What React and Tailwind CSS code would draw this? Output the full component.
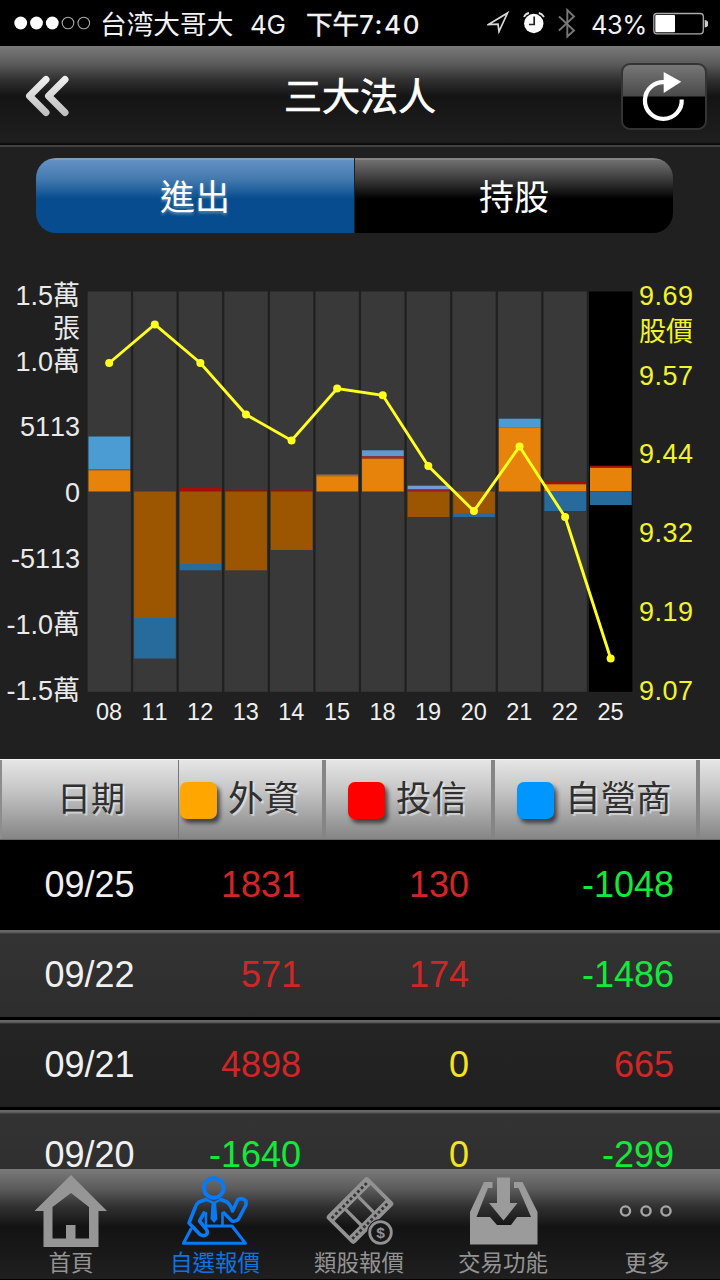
import React from "react";

const CJK = "font-['Liberation_Sans','Noto_Sans_CJK_TC',sans-serif]";

const days = ["08", "11", "12", "13", "14", "15", "18", "19", "20", "21", "22", "25"];

const segments = [
  [0, 436.5, 469, "#4b9cd3"], [0, 469, 470.3, "#7d5866"], [0, 470.3, 491.5, "#e7820a"],
  [1, 491.5, 618, "#9c5500"], [1, 618, 658.5, "#266b9c"],
  [2, 487.7, 491.5, "#a3100c"], [2, 491.5, 564, "#9c5500"], [2, 564, 570.3, "#266b9c"],
  [3, 490, 491.5, "#7b1a10"], [3, 491.5, 570.3, "#9c5500"],
  [4, 490, 491.5, "#7b1a10"], [4, 491.5, 550, "#9c5500"],
  [5, 474.5, 476.2, "#9c6b5e"], [5, 476.2, 491.5, "#e7820a"],
  [6, 450.3, 456.3, "#5d9bd0"], [6, 456.3, 458.7, "#a82a22"], [6, 458.7, 491.5, "#e7820a"],
  [7, 485.7, 489.5, "#6d9dd2"], [7, 489.5, 491.5, "#9a1c26"], [7, 491.5, 517, "#9c5500"],
  [8, 491.5, 513, "#9c5500"], [8, 513, 517, "#266b9c"],
  [9, 418.7, 427.7, "#4b9cd3"], [9, 427.7, 491.5, "#e7820a"],
  [10, 481.7, 484.3, "#a3100c"], [10, 484.3, 491.5, "#e7820a"], [10, 491.5, 511, "#266b9c"],
  [11, 465.7, 467.7, "#a3100c"], [11, 467.7, 491.5, "#e7820a"], [11, 491.5, 505, "#266b9c"],
];

const prices = [363, 324.5, 363, 414.5, 440.5, 388.5, 395.3, 466, 511, 446.5, 517, 658.5];

const volumeAxis = [
  ["1.5萬", 304.5], ["張", 338], ["1.0萬", 371], ["5113", 436],
  ["0", 502], ["-5113", 567.5], ["-1.0萬", 634], ["-1.5萬", 699.5],
];

const priceAxis = [
  ["9.69", 304.5], ["股價", 341], ["9.57", 384.5], ["9.44", 463],
  ["9.32", 541.5], ["9.19", 620.5], ["9.07", 699.5],
];

const rows = [
  ["09/25", "1831", "130", "-1048"],
  ["09/22", "571", "174", "-1486"],
  ["09/21", "4898", "0", "665"],
  ["09/20", "-1640", "0", "-299"],
];

const centre = (i) => 109.2 + i * 45.59;

function StatusBar() {
  return (
    <div className="flex h-[46px] shrink-0 items-center bg-black text-[26px] leading-none text-[#f2f2f2] font-['Inter','Noto_Sans_CJK_TC',sans-serif]">
      <svg className="ml-[14px] w-[78px] shrink-0" height="14" viewBox="0 0 78 14">
        {[6.7, 22.5, 38.3].map((x) => <circle key={x} cx={x} cy="7" r="6.4" fill="#fff" />)}
        {[54, 69.8].map((x) => <circle key={x} cx={x} cy="7" r="5.8" fill="none" stroke="#aaa" strokeWidth="1.1" />)}
      </svg>
      <span className="ml-[8px] mt-[2px] w-[150px] shrink-0 whitespace-nowrap text-[26.7px]">台湾大哥大</span>
      <span className="mt-[3px] w-[56px] shrink-0 tracking-[-0.2px]">4G</span>
      <span className="mt-[3px] flex w-[181px] shrink-0 items-center whitespace-nowrap">
        <span className="text-[26.5px] [-webkit-text-stroke:0.5px_#f2f2f2]">下午</span>
        <span className="text-[26px] font-medium tracking-[1.6px]">7:40</span>
      </span>
      <svg className="w-[90px] shrink-0" height="40" viewBox="487 4 90 40">
        <path d="M488.5 25.5L507.5 14L499 32.5L498 25.2Z" fill="none" stroke="#d8d8d8" strokeWidth="1.7" strokeLinejoin="miter" />
        <circle cx="533.8" cy="24.5" r="9.7" fill="#fff" />
        <path d="M534.2 17.5V25.5H529" fill="none" stroke="#222" strokeWidth="1.7" />
        <path d="M524 18Q525.3 14.8 529 14M544 18Q542.2 14.8 538.8 14" fill="none" stroke="#ddd" strokeWidth="1.8" />
        <path d="M559 17.5L574 31.5L567.3 37.5V11L574 17.5L559 31.5" fill="none" stroke="#777" strokeWidth="1.9" />
      </svg>
      <span className="ml-[14px] mt-[3px] w-[61px] shrink-0 text-[25.5px] tracking-[-0.5px]">43%</span>
      <svg className="w-[56px] shrink-0" height="24" viewBox="652 11.5 56 24">
        <rect x="653.8" y="14" width="49.5" height="20.3" rx="3" fill="none" stroke="#aaa" strokeWidth="1.3" />
        <rect x="655.3" y="15.6" width="19.7" height="17.2" rx="1" fill="#fff" />
        <path d="M704.7 20.5Q708.5 21 708.5 24.3Q708.5 27.5 704.7 28Z" fill="#ccc" />
      </svg>
    </div>
  );
}

function Header() {
  return (
    <header className="flex h-[101px] shrink-0 items-start justify-between border-b-2 border-[#424242] bg-[linear-gradient(#797979_0px,#5b5b5b_18px,#303030_34px,#141414_50px,#1f1f1f_96px,#0a0a0a_98px,#0a0a0a_99px)] pl-6 pr-[13px] text-white">
      <svg className="mt-[28px]" width="75" height="44" viewBox="24 74 75 44">
        <defs>
          <linearGradient id="back" x1="0" y1="76" x2="0" y2="116" gradientUnits="userSpaceOnUse">
            <stop stopColor="#f2f2f2" /><stop offset="1" stopColor="#bdbdbd" />
          </linearGradient>
        </defs>
        <path d="M46 79.5L29.5 96L46 112.5M65 79.5L48.5 96L65 112.5" fill="none" stroke="url(#back)" strokeWidth="7" strokeLinecap="round" strokeLinejoin="round" />
      </svg>
      <h1 className={`mt-[25px] text-[38px] font-normal leading-[52px] [-webkit-text-stroke:0.7px_#fff] ${CJK}`}>三大法人</h1>
      <div className="mt-[17px] flex h-[67px] w-[86px] rounded-[9px] border-2 border-[#343434] bg-[linear-gradient(#777_0px,#494949_31px,#000_32px)]">
        <svg width="82" height="63" viewBox="623 65 82 63">
          <path d="M681.7 99.5A18.4 18.4 0 1 1 665 82.2" fill="none" stroke="#fff" strokeWidth="4.2" />
          <path d="M663.7 72L681.3 81.8L663.7 93Z" fill="#fff" />
        </svg>
      </div>
    </header>
  );
}

function Tabs() {
  return (
    <div className={`mx-[36px] mt-[11px] flex h-[75px] w-[637px] shrink-0 overflow-hidden rounded-[20px] text-[35px] text-white ${CJK}`}>
      <button className="flex w-[318px] items-center justify-center border-t-2 border-[#829fb8] bg-[linear-gradient(#6591c4_0px,#4178ae_20px,#064c8e_39px,#064c8e)] pt-[4px] [text-shadow:0_2px_3px_rgba(255,255,255,0.35)]">進出</button>
      <button className="ml-px flex flex-1 items-center justify-center border-t-2 border-[#858585] bg-[linear-gradient(#707070_0px,#393939_20px,#000_39px,#000)] pt-[4px]">持股</button>
    </div>
  );
}

function Chart() {
  return (
    <svg className={`mt-[26px] shrink-0 [font-kerning:none] ${CJK}`} width="720" height="500" viewBox="0 259 720 500">
      {days.map((d, i) => (
        <g key={d}>
          <rect x={87.6 + i * 45.59} y="291.5" width="43.3" height="400.3" fill={d === "25" ? "#000" : "#393939"} />
          <text x={centre(i) - 0.2} y="720" fontSize="23.5" textAnchor="middle" fill="#f0f0f0">{d}</text>
        </g>
      ))}
      {segments.map(([c, top, bottom, fill], i) => (
        <rect key={i} x={88.5 + c * 45.59} y={top} width="41.7" height={bottom - top} fill={fill} />
      ))}
      <polyline points={prices.map((y, i) => `${centre(i)},${y}`).join(" ")} fill="none" stroke="#ffff20" strokeWidth="2.9" />
      {prices.map((y, i) => <circle key={i} cx={centre(i)} cy={y} r="4" fill="#ffff20" />)}
      {volumeAxis.map(([t, y]) => (
        <text key={t} x="80" y={y} fontSize="27" textAnchor="end" fill="#eaeaea">{t}</text>
      ))}
      {priceAxis.map(([t, y]) => (
        <text key={t} x="639" y={y} fontSize="27" textLength="54" fill="#f3f32c">{t}</text>
      ))}
    </svg>
  );
}

function HeadCell({ className, swatch, children }) {
  return (
    <div className={`flex items-center ${className}`}>
      {swatch && <span className={`mr-[11px] mt-[1px] size-[37px] shrink-0 rounded-[7px] shadow-[3px_4px_4px_rgba(0,0,0,0.6)] ${swatch}`} />}
      <span className="whitespace-nowrap">{children}</span>
    </div>
  );
}

function tone(v) {
  if (v === "0") return "text-[#f5e322]";
  return v.startsWith("-") ? "text-[#14e83c]" : "text-[#d12626]";
}

function Table() {
  return (
    <section className={`flex h-[410px] shrink-0 flex-col overflow-hidden ${CJK}`}>
      <div className="flex h-[81px] shrink-0 border-b border-t border-b-[#6d6d6d] border-t-[#f3f3f3] bg-[linear-gradient(#e6e6e6,#c4c4c4_40%,#858585)] text-[35.5px] text-[#303030] [text-shadow:2px_2px_1px_rgba(255,255,255,0.5)]">
        <HeadCell className="w-[179px] justify-center border-l-2 border-r border-l-[#8d8d8d] border-r-[#777] pl-[2px] text-[34px]">日期</HeadCell>
        <HeadCell className="w-[147px] border-r-4 border-[#858585] pl-px" swatch="bg-[#ffa600]">外資</HeadCell>
        <HeadCell className="w-[169px] border-r-4 border-[#858585] pl-[22px]" swatch="bg-[#ff0000]">投信</HeadCell>
        <HeadCell className="w-[205px] border-r-4 border-[#858585] pl-[22px]" swatch="bg-[#0096ff]">自營商</HeadCell>
      </div>
      {rows.map((r, i) => (
        <div
          key={r[0]}
          className={`flex h-[90px] shrink-0 items-center text-[36px] leading-none [font-kerning:none] ${
            i === 0
              ? "bg-black"
              : i === 2
                ? "bg-[linear-gradient(#666_0px,#666_2px,#242424_4px,#202020_87px,#000_87px)]"
                : "bg-[linear-gradient(#666_0px,#666_2px,#333_4px,#2d2d2d_87px,#000_87px)]"
          }`}
        >
          <span className="w-[179px] text-center text-[#f0f0f0]">{r[0]}</span>
          <span className={`w-[122px] text-right ${tone(r[1])}`}>{r[1]}</span>
          <span className={`w-[168px] text-right ${tone(r[2])}`}>{r[2]}</span>
          <span className={`w-[205px] text-right ${tone(r[3])}`}>{r[3]}</span>
        </div>
      ))}
    </section>
  );
}

function HomeIcon() {
  return <path fillRule="evenodd" d="M71 1175L107 1211H98.5V1247H43.5V1211H34.5ZM71 1193L52.5 1207V1238.5H66V1225H75.5V1238.5H89V1207Z" fill="#969696" />;
}

function QuoteIcon() {
  return (
    <g fill="none" stroke="#087af5" strokeLinejoin="round" strokeLinecap="round">
      <circle cx="213.8" cy="1188" r="9.8" strokeWidth="4" />
      <path d="M206 1199.5L199 1202Q196 1204 195 1208L189 1223L200 1234.5Q204 1237 207 1234Q208 1231 206 1229L199.5 1221L204 1213" strokeWidth="3.6" />
      <path d="M221 1199.5L227 1202Q230 1204 232.5 1211L238 1199.5Q242 1197 246 1201V1205L238.5 1219Q236 1222 232 1221L224 1213" strokeWidth="3.6" />
      <path d="M206 1199.5L213.8 1203L221 1199.5" strokeWidth="2.5" />
      <path d="M206 1213V1225M222.5 1213V1225" strokeWidth="2.6" />
      <path d="M211.5 1203H216L217.5 1219L214 1223L210.5 1219Z" fill="#087af5" stroke="none" />
      <path d="M191 1229L183.5 1243.3H245.5L232 1226H206" strokeWidth="3" />
    </g>
  );
}

function FilmIcon() {
  return (
    <g fill="none" stroke="#929292">
      <g transform="translate(360 1210.5) rotate(-45)">
        <rect x="-28" y="-18.5" width="56" height="37" rx="2" strokeWidth="2.4" />
        <path d="M-28 -14.5H28M-28 14.5H28" strokeWidth="8" />
        <path d="M-25.5 -14.6H26M-25.5 14.6H26" stroke="#343434" strokeWidth="2.8" strokeDasharray="2.8 2.4" />
        <path d="M-27 -11V11M-9.5 -11V11M8.5 -11V11M27 -11V11" strokeWidth="3.2" />
      </g>
      <circle cx="380.5" cy="1232.5" r="13" fill="#181818" stroke="#181818" />
      <circle cx="380.5" cy="1232.5" r="10.8" strokeWidth="2.8" />
      <text x="380.5" y="1238" textAnchor="middle" fontSize="15.5" fontWeight="700" fill="#929292" stroke="none" className="font-['Liberation_Sans',sans-serif]">$</text>
    </g>
  );
}

function TradeIcon() {
  return (
    <g fill="#9b9b9b">
      <path fillRule="evenodd" d="M484 1182H492.5V1188H488L476.5 1217H490L497 1225H511L517 1217H531L518.5 1188H514V1182H522.5L537.5 1212V1244.5H470V1212Z" />
      <path d="M497 1177.5H510V1203H517.5L503.5 1220.5L489 1203H497Z" />
    </g>
  );
}

function MoreIcon() {
  return (
    <g fill="none" stroke="#a6a6a6" strokeWidth="2.4">
      <circle cx="625.5" cy="1211" r="4.6" />
      <circle cx="646" cy="1211" r="4.6" />
      <circle cx="666" cy="1211" r="4.6" />
    </g>
  );
}

function BottomNav() {
  const items = [
    ["首頁", HomeIcon], ["自選報價", QuoteIcon], ["類股報價", FilmIcon], ["交易功能", TradeIcon], ["更多", MoreIcon],
  ];
  return (
    <nav className={`grid h-[111px] shrink-0 grid-cols-5 border-b border-black bg-[linear-gradient(#7a7a7a_0px,#5b5b5b_20px,#303030_38px,#131313_58px,#1f1f1f_110px)] ${CJK}`}>
      {items.map(([label, Icon], i) => (
        <div key={label} className={`flex flex-col items-center text-[22.5px] leading-[31px] ${i === 1 ? "text-[#0d74e2]" : "text-[#939393]"}`}>
          <svg className="shrink-0" width="144" height="79" viewBox={`${i * 144} 1169 144 79`}><Icon /></svg>
          <span className="-ml-[2px]">{label}</span>
        </div>
      ))}
    </nav>
  );
}

export default function App() {
  return (
    <div className="flex h-[1280px] w-[720px] flex-col overflow-hidden bg-[#202020]">
      <StatusBar />
      <Header />
      <Tabs />
      <Chart />
      <Table />
      <BottomNav />
    </div>
  );
}
